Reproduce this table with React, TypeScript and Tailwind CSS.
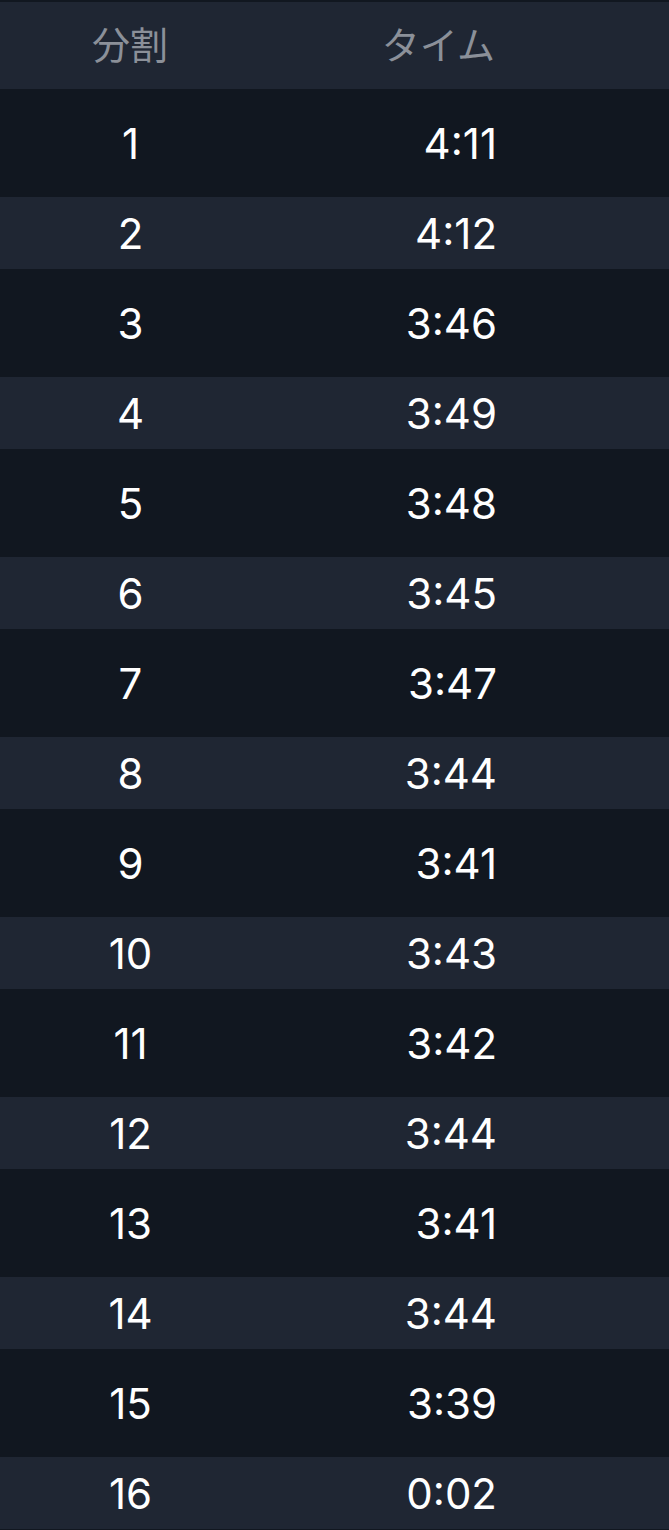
const splits = [
  { n: 1, time: "4:11" },
  { n: 2, time: "4:12" },
  { n: 3, time: "3:46" },
  { n: 4, time: "3:49" },
  { n: 5, time: "3:48" },
  { n: 6, time: "3:45" },
  { n: 7, time: "3:47" },
  { n: 8, time: "3:44" },
  { n: 9, time: "3:41" },
  { n: 10, time: "3:43" },
  { n: 11, time: "3:42" },
  { n: 12, time: "3:44" },
  { n: 13, time: "3:41" },
  { n: 14, time: "3:44" },
  { n: 15, time: "3:39" },
  { n: 16, time: "0:02" },
];

export default function App() {
  return (
    <div
      className="w-[669px] min-h-[1530px] bg-[#111720] pt-[2px] pb-[1px]"
      style={{ fontFamily: 'Inter, "Noto Sans CJK JP", sans-serif' }}
    >
      {/* header */}
      <div className="flex h-[87px] items-center bg-[#1f2633] text-[38px] text-[#8b9099]">
        <div className="w-[260px] text-center">分割</div>
        <div className="w-[235px] text-right">タイム</div>
      </div>

      {splits.map((s) => {
        const odd = s.n % 2 === 1;
        return (
          <div
            key={s.n}
            className={
              odd
                ? "flex h-[108px] items-center bg-[#111720] text-[42px] text-white"
                : "flex h-[72px] items-center bg-[#1f2633] text-[42px] text-white"
            }
          >
            <div className="w-[261px] text-center">{s.n}</div>
            <div className="w-[236px] text-right">{s.time}</div>
          </div>
        );
      })}
    </div>
  );
}
